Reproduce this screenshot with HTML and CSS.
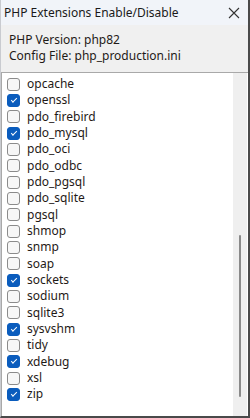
FILE: index.html
```html
<!DOCTYPE html>
<html lang="en">
<head>
    <meta charset="UTF-8">
    <title>PHP Extensions Enable/Disable</title>
    <link rel="stylesheet" href="styles.css">
</head>
<body>
    <div class="window">
        <div class="titlebar">
            <span class="title">PHP Extensions Enable/Disable</span>
            <svg class="close" width="12" height="12" viewBox="0 0 12 12">
                <path d="M1 1 L11 11 M11 1 L1 11" stroke="#333" stroke-width="1.1" fill="none"/>
            </svg>
        </div>
        <div class="info">
            <div>PHP Version: php82</div>
            <div>Config File: php_production.ini</div>
        </div>
        <div class="listbox">
            <ul class="items">
                <li><span class="box"></span>opcache</li>
                <li><span class="box on"></span>openssl</li>
                <li><span class="box"></span>pdo_firebird</li>
                <li><span class="box on"></span>pdo_mysql</li>
                <li><span class="box"></span>pdo_oci</li>
                <li><span class="box"></span>pdo_odbc</li>
                <li><span class="box"></span>pdo_pgsql</li>
                <li><span class="box"></span>pdo_sqlite</li>
                <li><span class="box"></span>pgsql</li>
                <li><span class="box"></span>shmop</li>
                <li><span class="box"></span>snmp</li>
                <li><span class="box"></span>soap</li>
                <li><span class="box on"></span>sockets</li>
                <li><span class="box"></span>sodium</li>
                <li><span class="box"></span>sqlite3</li>
                <li><span class="box on"></span>sysvshm</li>
                <li><span class="box"></span>tidy</li>
                <li><span class="box on"></span>xdebug</li>
                <li><span class="box"></span>xsl</li>
                <li><span class="box on"></span>zip</li>
            </ul>
            <div class="scrollbar">
                <div class="thumb"></div>
            </div>
        </div>
    </div>
</body>
</html>
```

FILE: styles.css
```css
html, body {
    margin: 0;
    padding: 0;
}
body {
    font-family: "Noto Sans", "Open Sans", sans-serif;
    font-size: 12px;
    color: #1f1a17;
    background: #f0f0f0;
}
.window {
    width: 250px;
    height: 418px;
    box-sizing: border-box;
    display: flex;
    flex-direction: column;
    background: #f0f0f0;
    border-left: 1px solid #c9cbd0;
    border-right: 2px solid #4a4a4a;
    border-bottom: 2px solid #4a4a4a;
}
.titlebar {
    height: 25px;
    flex: none;
    display: flex;
    align-items: center;
    justify-content: space-between;
    padding: 0 8px 0 3px;
    background: #f1f4f9;
}
.title {
    color: #1a1a1a;
}
.close {
    margin-top: 1px;
}
.info {
    padding: 7px 8px 6px;
    line-height: 16px;
    height: 34px;
}
.listbox {
    flex: 1;
    display: flex;
    background: #fff;
    border-top: 1px solid #a9a9a9;
    border-left: 1px solid #a9a9a9;
    min-height: 0;
}
.items {
    list-style: none;
    margin: 0;
    padding: 3px 0 0;
    flex: 1;
}
.items li {
    height: 16.33px;
    display: flex;
    align-items: center;
    gap: 7px;
    padding-left: 5px;
    line-height: 16px;
}
.box {
    width: 11px;
    height: 11px;
    border: 1px solid #8b8b8b;
    border-radius: 3px;
    background: #f7f7f7;
    flex: none;
    position: relative;
}
.box.on {
    background: #0a5cbd;
    border-color: #0a5cbd;
}
.box.on::after {
    content: "";
    position: absolute;
    left: 3px;
    top: 3px;
    width: 5px;
    height: 2px;
    border-left: 1px solid #fff;
    border-bottom: 1px solid #fff;
    transform: rotate(-45deg);
}
.scrollbar {
    width: 14px;
    flex: none;
    margin-right: 1px;
    background: #efefef;
    padding: 162px 0 0 6px;
    box-sizing: border-box;
}
.thumb {
    width: 2px;
    height: 162px;
    background: #8a8a8a;
    border-radius: 1px;
}
```
